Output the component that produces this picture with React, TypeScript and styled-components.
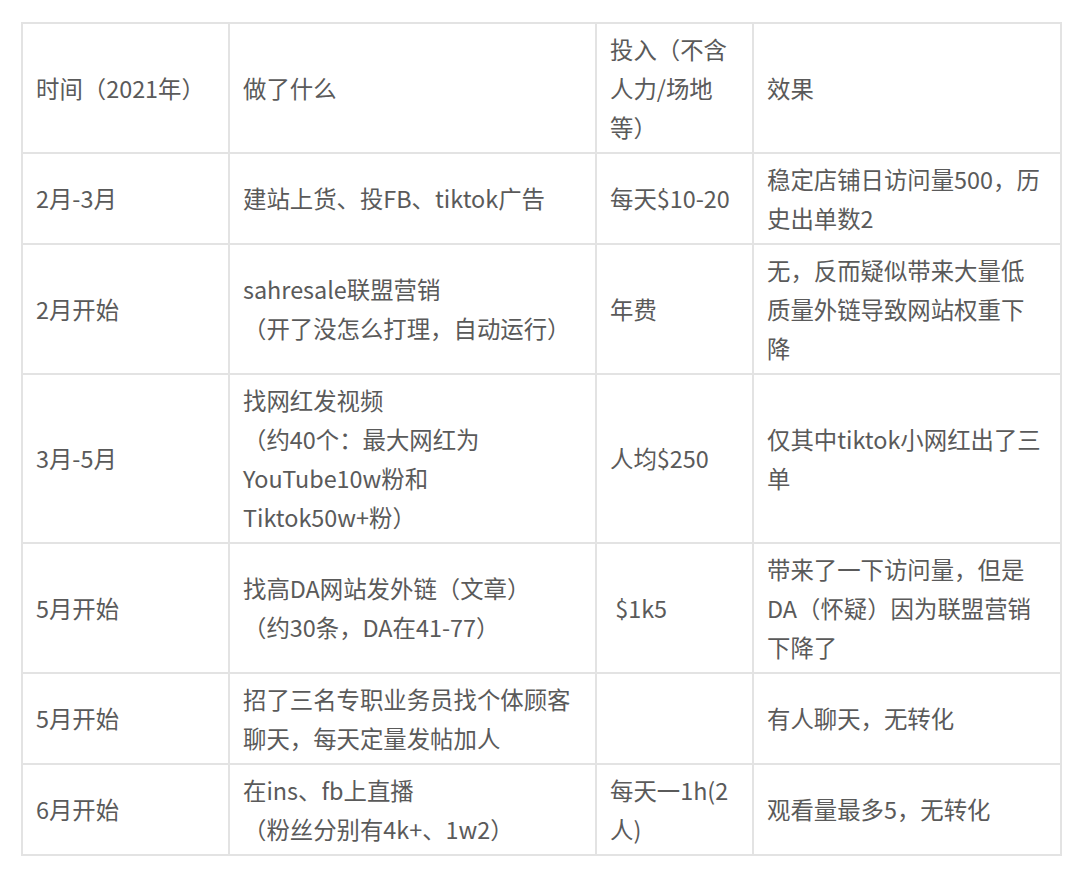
import React from 'react';
import styled, { createGlobalStyle } from 'styled-components';

type Row = {
  time: string;
  action: string[];
  cost: string[];
  result: string[];
};

const header: Row = {
  time: '时间（2021年）',
  action: ['做了什么'],
  cost: ['投入（不含', '人力/场地', '等）'],
  result: ['效果'],
};

const rows: Row[] = [
  {
    time: '2月-3月',
    action: ['建站上货、投FB、tiktok广告'],
    cost: ['每天$10-20'],
    result: ['稳定店铺日访问量500，历', '史出单数2'],
  },
  {
    time: '2月开始',
    action: ['sahresale联盟营销', '（开了没怎么打理，自动运行）'],
    cost: ['年费'],
    result: ['无，反而疑似带来大量低', '质量外链导致网站权重下', '降'],
  },
  {
    time: '3月-5月',
    action: ['找网红发视频', '（约40个：最大网红为', 'YouTube10w粉和', 'Tiktok50w+粉）'],
    cost: ['人均$250'],
    result: ['仅其中tiktok小网红出了三', '单'],
  },
  {
    time: '5月开始',
    action: ['找高DA网站发外链（文章）', '（约30条，DA在41-77）'],
    cost: ['\u00a0$1k5'],
    result: ['带来了一下访问量，但是', 'DA（怀疑）因为联盟营销', '下降了'],
  },
  {
    time: '5月开始',
    action: ['招了三名专职业务员找个体顾客', '聊天，每天定量发帖加人'],
    cost: [],
    result: ['有人聊天，无转化'],
  },
  {
    time: '6月开始',
    action: ['在ins、fb上直播', '（粉丝分别有4k+、1w2）'],
    cost: ['每天一1h(2', '人)'],
    result: ['观看量最多5，无转化'],
  },
];

const GlobalStyle = createGlobalStyle`
  html, body {
    margin: 0;
    padding: 0;
    background: #ffffff;
  }
  body {
    font-family: "Noto Sans CJK SC", "Noto Sans", sans-serif;
    color: #5a5a5a;
  }
`;

const Page = styled.div`
  padding: 22px 0 0 21px;
`;

const Table = styled.table`
  border-collapse: collapse;
  table-layout: fixed;
  width: 1039px;
  border: 2px solid #e3e3e3;
`;

const Col = styled.col<{ $w: number }>`
  width: ${(p) => p.$w}px;
`;

const Cell = styled.td`
  border: 2px solid #e3e3e3;
  padding: 5.5px 12px 5.5px 13px;
  vertical-align: middle;
  text-align: left;
  font-size: 23.4px;
  line-height: 39px;
  font-weight: 400;
  color: #5a5a5a;
  word-break: break-all;
`;

const Lines: React.FC<{ lines: string[] }> = ({ lines }) => (
  <>
    {lines.map((line, i) => (
      <React.Fragment key={i}>
        {i > 0 && <br />}
        {line}
      </React.Fragment>
    ))}
  </>
);

const TableRow: React.FC<{ row: Row }> = ({ row }) => (
  <tr>
    <Cell>{row.time}</Cell>
    <Cell><Lines lines={row.action} /></Cell>
    <Cell><Lines lines={row.cost} /></Cell>
    <Cell><Lines lines={row.result} /></Cell>
  </tr>
);

const App: React.FC = () => (
  <Page>
    <GlobalStyle />
    <Table>
      <colgroup>
        <Col $w={207} />
        <Col $w={367} />
        <Col $w={157} />
        <Col $w={308} />
      </colgroup>
      <tbody>
        <TableRow row={header} />
        {rows.map((row, i) => (
          <TableRow key={i} row={row} />
        ))}
      </tbody>
    </Table>
  </Page>
);

export default App;
